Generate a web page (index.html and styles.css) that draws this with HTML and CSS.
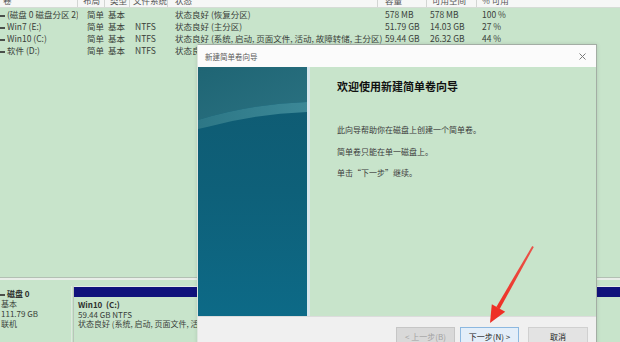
FILE: index.html
```html
<!DOCTYPE html>
<html lang="zh-CN">
<head>
<meta charset="utf-8">
<title>新建简单卷向导</title>
<link rel="stylesheet" href="styles.css">
</head>
<body>
<div class="screen">
  <div class="volumes">
    <div class="vhead">
      <div class="c c1">卷</div>
      <div class="c c2">布局</div>
      <div class="c c3">类型</div>
      <div class="c c4">文件系统</div>
      <div class="c c5">状态</div>
      <div class="c c6">容量</div>
      <div class="c c7">可用空间</div>
      <div class="c c8">% 可用</div>
    </div>
    <div class="vrow">
      <div class="c c1"><span class="dash"></span>(磁盘 0 磁盘分区 2)</div>
      <div class="c c2">简单</div>
      <div class="c c3">基本</div>
      <div class="c c4"></div>
      <div class="c c5">状态良好 (恢复分区)</div>
      <div class="c c6">578 MB</div>
      <div class="c c7">578 MB</div>
      <div class="c c8">100 %</div>
    </div>
    <div class="vrow">
      <div class="c c1"><span class="dash"></span>Win7 (E:)</div>
      <div class="c c2">简单</div>
      <div class="c c3">基本</div>
      <div class="c c4">NTFS</div>
      <div class="c c5">状态良好 (主分区)</div>
      <div class="c c6">51.79 GB</div>
      <div class="c c7">14.03 GB</div>
      <div class="c c8">27 %</div>
    </div>
    <div class="vrow">
      <div class="c c1"><span class="dash"></span>Win10 (C:)</div>
      <div class="c c2">简单</div>
      <div class="c c3">基本</div>
      <div class="c c4">NTFS</div>
      <div class="c c5">状态良好 (系统, 启动, 页面文件, 活动, 故障转储, 主分区)</div>
      <div class="c c6">59.44 GB</div>
      <div class="c c7">26.32 GB</div>
      <div class="c c8">44 %</div>
    </div>
    <div class="vrow">
      <div class="c c1"><span class="dash"></span>软件 (D:)</div>
      <div class="c c2">简单</div>
      <div class="c c3">基本</div>
      <div class="c c4">NTFS</div>
      <div class="c c5">状态良好 (主分区)</div>
      <div class="c c6">0.56 GB</div>
      <div class="c c7">0.40 GB</div>
      <div class="c c8">71 %</div>
    </div>
  </div>

  <div class="splitter"></div>

  <div class="disks">
    <div class="disk-label">
      <div class="disk-name"><span class="dash"></span>磁盘 0</div>
      <div>基本</div>
      <div>111.79 GB</div>
      <div>联机</div>
    </div>
    <div class="partition">
      <div class="part-bar"></div>
      <div class="part-body">
        <div class="part-name">Win10&nbsp; (C:)</div>
        <div>59.44 GB NTFS</div>
        <div>状态良好 (系统, 启动, 页面文件, 活动, 故障转储, 主分区)</div>
      </div>
    </div>
  </div>

  <div class="wizard">
    <div class="wiz-title">
      <span class="wiz-title-text">新建简单卷向导</span>
      <svg class="wiz-close" width="7" height="7" viewBox="0 0 7 7"><path d="M0.5 0.5 L6.5 6.5 M6.5 0.5 L0.5 6.5" stroke="#7a7a7a" stroke-width="1"/></svg>
    </div>
    <div class="wiz-body">
      <div class="wiz-side">
        <svg width="109" height="249" viewBox="0 0 109 249" preserveAspectRatio="none">
          <defs>
            <linearGradient id="tealBody" x1="0" y1="0" x2="0" y2="1">
              <stop offset="0" stop-color="#0f5a71"/>
              <stop offset="0.5" stop-color="#0e6079"/>
              <stop offset="1" stop-color="#0d6a87"/>
            </linearGradient>
            <linearGradient id="tealTop" x1="0" y1="0" x2="1" y2="1">
              <stop offset="0" stop-color="#1f6574"/>
              <stop offset="1" stop-color="#2a7181"/>
            </linearGradient>
            <linearGradient id="band" x1="0" y1="0" x2="1" y2="0">
              <stop offset="0" stop-color="#2d7786"/>
              <stop offset="1" stop-color="#3c8897"/>
            </linearGradient>
          </defs>
          <rect x="0" y="0" width="109" height="249" fill="url(#tealBody)"/>
          <path d="M0 0 H109 V35 Q52 37 0 53 Z" fill="url(#tealTop)"/>
          <path d="M0 53 Q52 37 109 35 V45 Q56 47 9 60 L0 62 Z" fill="url(#band)"/>
        </svg>
      </div>
      <div class="wiz-content">
        <h1 class="wiz-heading">欢迎使用新建简单卷向导</h1>
        <p class="wiz-text">此向导帮助你在磁盘上创建一个简单卷。</p>
        <p class="wiz-text">简单卷只能在单一磁盘上。</p>
        <p class="wiz-text">单击“下一步”继续。</p>
      </div>
    </div>
    <div class="wiz-footer">
      <button class="btn btn-disabled">&lt; 上一步(B)</button>
      <button class="btn btn-primary">下一步(N) &gt;</button>
      <button class="btn btn-cancel">取消</button>
    </div>
  </div>

  <svg class="arrow" width="620" height="342" viewBox="0 0 620 342">
    <defs>
      <linearGradient id="red" x1="0" y1="0" x2="0" y2="1">
        <stop offset="0" stop-color="#e9544a"/>
        <stop offset="1" stop-color="#ef2f25"/>
      </linearGradient>
    </defs>
    <polygon points="533.8,246.9 532.2,246.1 496.3,306.9 499.7,309.1" fill="url(#red)"/>
    <polygon points="490,323 491.8,304.3 505.2,311.7" fill="#ee3026"/>
  </svg>
</div>
</body>
</html>
```

FILE: styles.css
```css
* {
  box-sizing: border-box;
}

html, body {
  margin: 0;
  padding: 0;
}

body {
  width: 620px;
  height: 342px;
  overflow: hidden;
  background: #c8e4cb;
  font-family: "Noto Sans CJK SC", "Noto Sans", sans-serif;
  color: #3a3f3a;
}

.screen {
  position: relative;
  width: 620px;
  height: 342px;
  overflow: hidden;
  display: flex;
  flex-direction: column;
  background: #c8e4cb;
}

/* ---- volume list ---- */
.volumes {
  height: 277px;
  flex: none;
  font-size: 8.5px;
}

.vhead,
.vrow {
  display: grid;
  grid-template-columns: 78px 27px 25px 38px 210px 49px 50px 1fr;
  white-space: nowrap;
}

.vhead {
  height: 15px;
  margin-top: -7px;
  line-height: 15px;
  background: #f6f7f6;
  border-bottom: 1px solid #d6dcd6;
  color: #555;
}

.vhead .c {
  border-right: 1px solid #d3d6d3;
  overflow: hidden;
}

.vhead .c8 {
  border-right: none;
}

.vrow {
  height: 12px;
  line-height: 12px;
}

.c {
  overflow: hidden;
}

.vhead .c1 { padding-left: 3px; }
.vhead .c2 { padding-left: 5px; }
.vhead .c3 { padding-left: 5px; }
.vhead .c4 { padding-left: 3px; }
.vhead .c5 { padding-left: 7px; }
.vhead .c6 { padding-left: 7px; }
.vhead .c7 { padding-left: 5px; }
.vhead .c8 { padding-left: 5px; }

.vrow .c1 { padding-left: 0; }
.vrow .c2 { padding-left: 9px; }
.vrow .c3 { padding-left: 3px; }
.vrow .c4 { padding-left: 5px; }
.vrow .c5 { padding-left: 7px; overflow: visible; }
.vrow .c6 { padding-left: 7px; }
.vrow .c7 { padding-left: 3px; }
.vrow .c8 { padding-left: 5px; }

.dash {
  display: inline-block;
  width: 5px;
  height: 2px;
  margin-right: 2px;
  vertical-align: middle;
  background: #4a4f4a;
}

/* ---- splitter ---- */
.splitter {
  flex: none;
  height: 3px;
  border-top: 1px solid #b3c0b4;
  background: #e9eee9;
}

/* ---- disk map ---- */
.disks {
  flex: 1;
  display: flex;
  padding-top: 6px;
  font-size: 8px;
  white-space: nowrap;
}

.disk-label {
  width: 72px;
  flex: none;
  padding-top: 3px;
  padding-left: 1px;
  line-height: 10px;
  border-right: 1px solid #dfe8df;
}

.disk-name {
  font-weight: bold;
  color: #2c2f2c;
}

.disk-name .dash {
  margin-left: -1px;
  margin-right: 2px;
}

.partition {
  flex: 1;
  margin-left: 1px;
  border-top: 1px solid #e6ebe6;
  border-left: 1px solid #b9c4b9;
  overflow: hidden;
}

.part-bar {
  height: 10px;
  background: #10127c;
}

.part-body {
  padding: 3px 0 0 4px;
  line-height: 9.5px;
}

.part-name {
  font-weight: bold;
  color: #2c2f2c;
}

/* ---- wizard dialog (floating window) ---- */
.wizard {
  position: absolute;
  left: 197px;
  top: 44px;
  width: 400px;
  height: 310px;
  display: flex;
  flex-direction: column;
  background: #c8e4cb;
  border: 1px solid #a3ada4;
  border-left-color: #dde6de;
  box-shadow: 0 0 4px rgba(0, 0, 0, 0.12);
}

.wiz-title {
  flex: none;
  height: 22px;
  display: flex;
  align-items: center;
  justify-content: space-between;
  padding: 0 10px 0 7px;
  background: #fbfbfb;
}

.wiz-title-text {
  font-size: 7.5px;
  color: #5a5a5a;
}

.wiz-close {
  display: block;
  margin-right: 0;
}

.wiz-body {
  flex: none;
  height: 249px;
  display: flex;
}

.wiz-side {
  width: 112px;
  flex: none;
  border-right: 3px solid #d7e7ec;
}

.wiz-side svg {
  display: block;
}

.wiz-content {
  flex: 1;
  padding: 12px 0 0 27px;
}

.wiz-heading {
  margin: 0;
  font-size: 11px;
  line-height: 14px;
  font-weight: bold;
  color: #111;
}

.wiz-text {
  margin: 0 0 9.5px 0;
  font-size: 8px;
  line-height: 12px;
  color: #3b3b3b;
}

.wiz-heading + .wiz-text {
  margin-top: 31px;
}

.wiz-footer {
  flex: 1;
  display: flex;
  align-items: flex-start;
  padding: 10px 8px 0 0;
  background: #f0f0f0;
  border-top: 1px solid #dcdcdc;
}

.btn {
  height: 19px;
  padding: 0;
  font-family: "Noto Sans CJK SC", "Noto Sans", sans-serif;
  font-size: 8px;
  line-height: 17px;
  text-align: center;
  border: 1px solid #adadad;
  background: #e1e1e1;
  color: #222;
}

.btn-disabled {
  width: 59px;
  margin-left: auto;
  border-color: #c6c6c6;
  background: #d9d9d9;
  color: #a2a2a2;
}

.btn-primary {
  width: 59px;
  margin-left: 5px;
  border-color: #8cb8e0;
  background: #e3eef9;
  color: #222;
}

.btn-cancel {
  width: 60px;
  margin-left: 9px;
  background: #e3e3e3;
  border-color: #d0d0d0;
}

/* ---- annotation arrow ---- */
.arrow {
  position: absolute;
  left: 0;
  top: 0;
  pointer-events: none;
}
```
